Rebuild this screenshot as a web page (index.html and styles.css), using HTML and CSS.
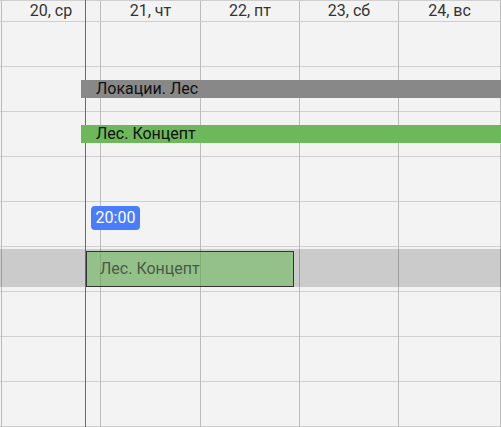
FILE: index.html
```html
<!DOCTYPE html>
<html lang="ru">
<head>
  <meta charset="UTF-8" />
  <meta name="viewport" content="width=device-width, initial-scale=1" />
  <title>Календарь</title>
  <link rel="stylesheet" href="styles.css">
</head>
<body>

  <div class="calendar">
    <div class="calendar-head">
      <div class="col col-edge"></div>
      <div class="col col-1">20, ср</div>
      <div class="col col-2">21, чт</div>
      <div class="col col-3">22, пт</div>
      <div class="col col-4">23, сб</div>
      <div class="col col-5">24, вс</div>
      <div class="col col-end"></div>
    </div>

    <div class="calendar-body">
      <div class="col col-edge"></div>
      <div class="col col-1"></div>
      <div class="col col-2"></div>
      <div class="col col-3"></div>
      <div class="col col-4"></div>
      <div class="col col-5"></div>
      <div class="col col-end"></div>
    </div>

    <div class="selected-row"></div>
    <div class="now-line"></div>

    <div class="bar bar-gray">Локации. Лес</div>
    <div class="bar bar-green">Лес. Концепт</div>

    <div class="time-badge">20:00</div>
    <div class="event-box">Лес. Концепт</div>
  </div>

</body>
</html>
```

FILE: styles.css
```css
:root {
  --bg: #f3f3f3;
  --line-v: #bcbcbc;
  --line-h: #cfcfcf;
  --text: #333333;
}

body {
  margin: 0;
  background-color: var(--bg);
  font-family: Roboto, "Noto Sans", sans-serif;
  font-size: 16px;
  color: var(--text);
  overflow: hidden;
}

.calendar {
  position: relative;
  width: 501px;
  height: 427px;
  overflow: hidden;
}

.calendar-head,
.calendar-body {
  display: flex;
}

.calendar-head {
  height: 20px;
  border-top: 1px solid var(--line-h);
  border-bottom: 1px solid var(--line-h);
  line-height: 20px;
}

.calendar-body {
  height: 405px;
  background: repeating-linear-gradient(to bottom, transparent 0 44px, var(--line-h) 44px 45px);
}

.col {
  flex: none;
  box-sizing: border-box;
  border-left: 1px solid var(--line-v);
  text-align: center;
}

.col-edge { width: 1px; border-left: none; }
.col-1 { width: 99px; }
.col-2 { width: 100px; }
.col-3 { width: 99px; }
.col-4 { width: 99px; }
.col-5 { width: 102px; }
.col-end { width: 1px; }

.selected-row {
  position: absolute;
  left: 0;
  right: 0;
  top: 249px;
  height: 38px;
  background-color: rgba(0, 0, 0, 0.165);
}

.now-line {
  position: absolute;
  left: 85px;
  top: 0;
  bottom: 0;
  width: 1px;
  background-color: #6a6a6a;
}

.bar {
  position: absolute;
  left: 81px;
  right: -10px;
  height: 18px;
  padding-left: 15px;
  line-height: 18px;
  color: #111;
}

.bar-gray {
  top: 80px;
  background-color: #888888;
}

.bar-green {
  top: 125px;
  background-color: #6cb85a;
}

.time-badge {
  position: absolute;
  left: 91px;
  top: 206px;
  width: 49px;
  height: 24px;
  line-height: 24px;
  text-align: center;
  border-radius: 4px;
  background-color: #4a7dfc;
  color: #fff;
}

.event-box {
  position: absolute;
  left: 86px;
  top: 251px;
  width: 208px;
  height: 36px;
  padding-left: 13px;
  box-sizing: border-box;
  line-height: 34px;
  border: 1px solid #333;
  background-color: rgba(108, 184, 90, 0.58);
  color: #4b5a47;
}
```
